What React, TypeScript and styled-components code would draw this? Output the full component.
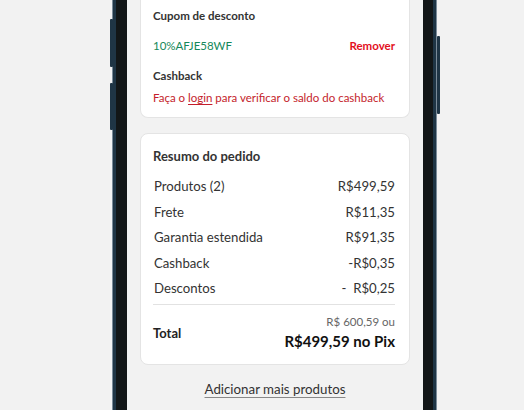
import React from 'react'
import styled, { createGlobalStyle } from 'styled-components'

const GlobalStyle = createGlobalStyle`
  html, body {
    margin: 0;
    padding: 0;
    background: #f2f2f2;
    font-family: Lato, 'Noto Sans', sans-serif;
  }
`

const rows = [
  { label: 'Produtos (2)', value: 'R$499,59' },
  { label: 'Frete', value: 'R$11,35' },
  { label: 'Garantia estendida', value: 'R$91,35' },
  { label: 'Cashback', value: '-R$0,35' },
  { label: 'Descontos', value: '-  R$0,25' },
]

export default function App() {
  return (
    <>
      <GlobalStyle />
      <Page>
        <Phone>
          <SideButton side="left" top={39} height={48} />
          <SideButton side="left" top={103} height={47} />
          <SideButton side="right" top={56} height={78} />
          <Screen>
            <Card first>
              <SectionTitle>Cupom de desconto</SectionTitle>
              <CouponRow>
                <Coupon>10%AFJE58WF</Coupon>
                <RemoveButton>Remover</RemoveButton>
              </CouponRow>
              <SectionTitle style={{ marginTop: 14 }}>Cashback</SectionTitle>
              <Warning>
                Faça o <u>login</u> para verificar o saldo do cashback
              </Warning>
            </Card>

            <Card>
              <SectionTitle summary>Resumo do pedido</SectionTitle>
              <Rows>
                {rows.map((r) => (
                  <Row key={r.label}>
                    <span>{r.label}</span>
                    <Value>{r.value}</Value>
                  </Row>
                ))}
              </Rows>
              <TotalRow>
                <TotalLabel>Total</TotalLabel>
                <TotalValues>
                  <OldPrice>R$ 600,59 ou</OldPrice>
                  <PixPrice>R$499,59 no Pix</PixPrice>
                </TotalValues>
              </TotalRow>
            </Card>

            <AddMore>Adicionar mais produtos</AddMore>
          </Screen>
        </Phone>
      </Page>
    </>
  )
}

const Page = styled.div`
  height: 410px;
  overflow: hidden;
  padding-left: 116px;
`

const Phone = styled.div`
  position: relative;
  width: 296px;
  margin-top: -20px;
  height: 440px;
  border-style: solid;
  border-color: #121617;
  border-width: 0 10px 0 11px;
  box-shadow: 0 0 0 3px #1f3545, 0 0 0 4px #7b8b98;
`

const SideButton = styled.div<{ side: 'left' | 'right'; top: number; height: number }>`
  position: absolute;
  top: ${({ top }) => top}px;
  height: ${({ height }) => height}px;
  width: 3px;
  background: #1f3545;
  ${({ side }) => (side === 'left' ? 'left: -17px;' : 'right: -17px;')}
  border-radius: 1px;
`

const Screen = styled.div`
  background: #f2f2f2;
  height: 100%;
  padding: 0 13px;
  box-sizing: border-box;
  display: flex;
  flex-direction: column;
`

const Card = styled.div<{ first?: boolean }>`
  background: #fff;
  border: 1px solid #e4e4e4;
  border-radius: 8px;
  padding: ${({ first }) => (first ? '28px 14px 11px 12px' : '14px 14px 13px 12px')};
  margin-top: ${({ first }) => (first ? '0' : '15px')};
  ${({ first }) => first && 'border-top: none; border-top-left-radius: 0; border-top-right-radius: 0;'}
`

const SectionTitle = styled.div<{ summary?: boolean }>`
  font-size: ${({ summary }) => (summary ? '13px' : '11.5px')};
  font-weight: 700;
  line-height: 16px;
  color: #333;
`

const CouponRow = styled.div`
  display: flex;
  justify-content: space-between;
  align-items: center;
  margin-top: 14px;
  line-height: 16px;
  font-size: 11.5px;
`

const Coupon = styled.span`
  color: #15885a;
`

const RemoveButton = styled.span`
  color: #e3101e;
  font-weight: 700;
`

const Warning = styled.div`
  margin-top: 6px;
  font-size: 11.5px;
  line-height: 16px;
  color: #c41d2b;

  u {
    text-underline-offset: 2px;
  }
`

const Rows = styled.div`
  display: flex;
  flex-direction: column;
  gap: 5.5px;
  margin-top: 12px;
  padding-bottom: 6px;
  border-bottom: 1px solid #e2e2e2;
`

const Row = styled.div`
  display: flex;
  justify-content: space-between;
  font-size: 13.2px;
  line-height: 20px;
  color: #333;
  padding-left: 1px;
`

const Value = styled.span`
  white-space: pre;
`

const TotalRow = styled.div`
  display: flex;
  justify-content: space-between;
  align-items: center;
  padding-top: 10px;
`

const TotalLabel = styled.span`
  font-size: 13px;
  font-weight: 700;
  color: #222;
`

const TotalValues = styled.div`
  display: flex;
  flex-direction: column;
  align-items: flex-end;
  gap: 2px;
`

const OldPrice = styled.span`
  font-size: 11.5px;
  line-height: 14px;
  color: #666;
`

const PixPrice = styled.span`
  font-size: 15px;
  line-height: 20px;
  font-weight: 700;
  color: #111;
`

const AddMore = styled.div`
  margin-top: 14px;
  text-align: center;
  font-size: 13.3px;
  line-height: 20px;
  color: #333;
  text-decoration: underline;
  text-decoration-color: #888;
  text-underline-offset: 3px;
`
